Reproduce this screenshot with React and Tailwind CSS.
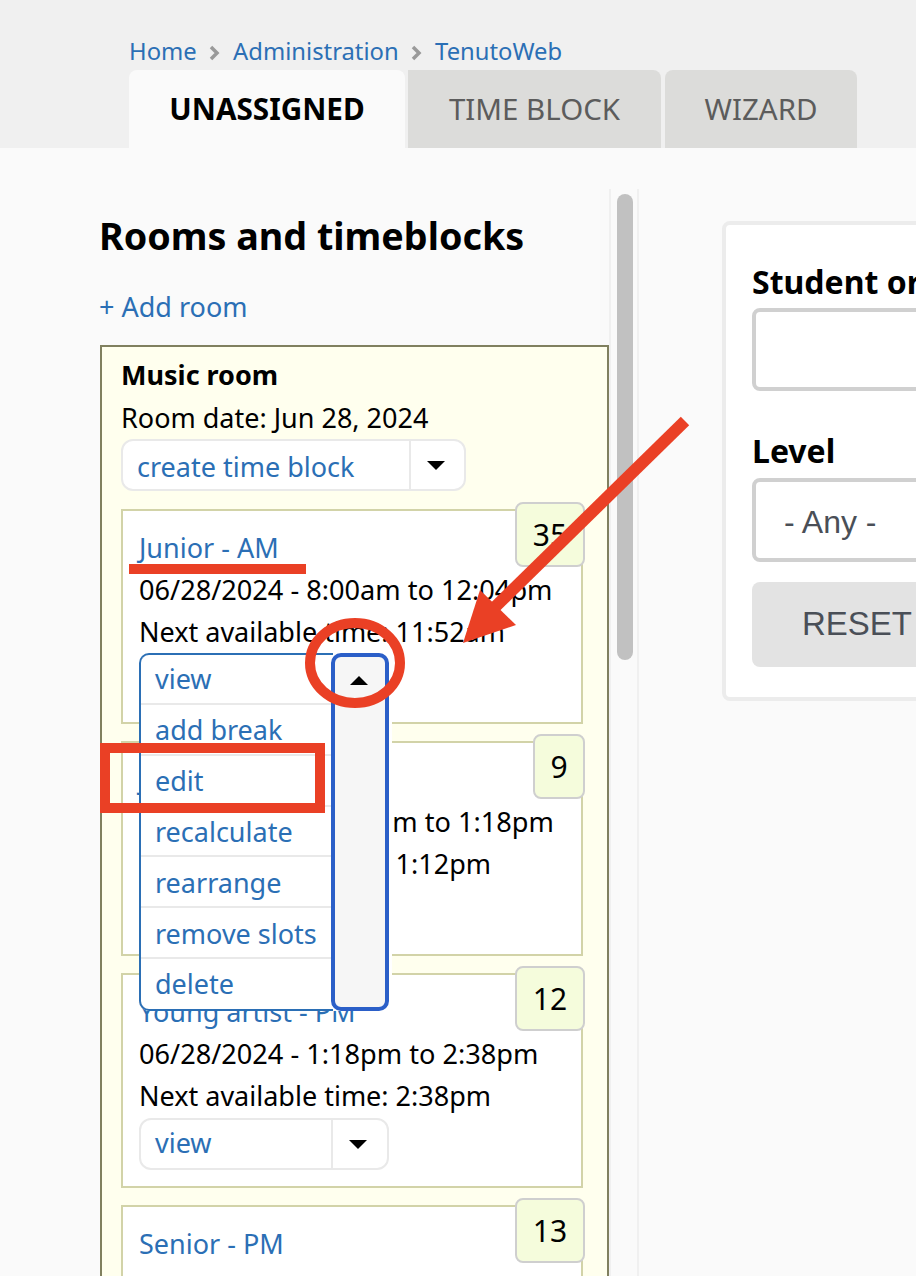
const sans = 'font-["Noto_Sans",sans-serif]';

function SplitButton({ label, width, mainWidth, labelClass = '' }) {
  return (
    <div
      className="flex h-[52px] rounded-[12px] border-2 border-[#e9e9e9] bg-white"
      style={{ width }}
    >
      <a className={`flex items-center pl-[14px] text-[#2b6fb5] ${labelClass}`} style={{ width: mainWidth }}>
        {label}
      </a>
      <div className="flex flex-1 items-center justify-center border-l-2 border-[#e9e9e9] pr-[4px]">
        <div className="h-0 w-0 border-x-[9px] border-t-[9px] border-x-transparent border-t-black" />
      </div>
    </div>
  );
}

function OpenDropdown() {
  const items = ['view', 'add break', 'edit', 'recalculate', 'rearrange', 'remove slots', 'delete'];
  return (
    <div className="absolute left-[16px] top-[142px] z-10 flex h-[358px] w-[253px] rounded-[10px] bg-white">
      <ul className="w-[194px] shrink-0 overflow-hidden rounded-l-[10px] border-2 border-r-0 border-[#2b6fb5]">
        {items.map((item, i) => (
          <li
            key={item}
            className={`flex items-center pl-[14px] text-[#2b6fb5] ${i ? 'h-[50.8px] border-t-2 border-[#e9e9e9] pt-[2px]' : 'h-[48px]'}`}
          >
            {item}
          </li>
        ))}
      </ul>
      <div className="-ml-[2px] flex w-[58px] shrink-0 justify-center rounded-[10px] border-[4px] border-[#2b5fc8] bg-[#f6f6f6] pt-[19px]">
        <div className="-ml-[2px] h-0 w-0 border-x-[9px] border-b-[9px] border-x-transparent border-b-black" />
      </div>
    </div>
  );
}

function TimeBlock({ title, count, badgeWidth, time, next, children }) {
  return (
    <div className="relative h-[215px] border-2 border-[#d2d3a8] bg-white pl-[16px] pt-[16px]">
      <a className="block text-[#2b6fb5]">{title}</a>
      <div className="text-[27.15px]">{time}</div>
      <div>{next}</div>
      <div className="mt-px">
        <SplitButton label="view" width={250} mainWidth={190} labelClass="pb-[2px]" />
      </div>
      <div
        className="absolute -right-[4px] -top-[9px] flex h-[65px] items-center justify-center rounded-[8px] border-2 border-[#cfcfcf] bg-[#f5fcdc] text-[30px] text-black"
        style={{ width: badgeWidth }}
      >
        {count}
      </div>
      {children}
    </div>
  );
}

function Chevron() {
  return (
    <svg className="mx-[12.7px] mt-[4px] shrink-0" width="11" height="16" viewBox="0 0 11 16" fill="none">
      <path d="M2 2 L8 8 L2 14" stroke="#9a9a9a" strokeWidth="3.5" />
    </svg>
  );
}

export default function App() {
  return (
    <div className={`relative h-[1276px] w-[916px] overflow-hidden bg-[#fafafa] text-[27px] leading-[42px] text-black ${sans}`}>
      {/* Breadcrumb and tabs */}
      <header className="h-[148px] bg-[#f0f0f0] pl-[129px] pt-[31px]">
        <nav className="flex h-[39px] items-center text-[23.8px] text-[#2b6fb5]">
          <a>Home</a>
          <Chevron />
          <a>Administration</a>
          <Chevron />
          <a>TenutoWeb</a>
        </nav>
        <div className="flex h-[78px] gap-[4px] text-[29.5px]">
          <div className="flex w-[276px] items-center justify-center rounded-t-[8px] bg-[#fafafa] text-[29.7px] font-bold">UNASSIGNED</div>
          <div className="-ml-px flex w-[253px] items-center justify-center rounded-tr-[8px] bg-[#dcdcda] text-[#5c5c5c]">TIME BLOCK</div>
          <div className="flex w-[192px] items-center justify-center rounded-t-[8px] bg-[#dcdcda] text-[#5c5c5c]">WIZARD</div>
        </div>
      </header>

      <main className="flex">
        {/* Rooms column */}
        <section className="w-[609px] shrink-0 pl-[100px]">
          <h2 className="mt-[63px] -ml-px text-[37.7px] font-bold leading-[50px]">Rooms and timeblocks</h2>
          <a className="mt-[25px] -ml-px block text-[#2b6fb5]">+ Add room</a>
          <div className="mt-[17px] border-2 border-[#80805f] bg-[#ffffee] pl-[19px] pr-[24px] pt-[7px]">
            <div className="font-bold">Music room</div>
            <div className="leading-[43px]">Room date: Jun 28, 2024</div>
            <SplitButton label="create time block" width={345} mainWidth={286} labelClass="pt-[3px]" />
            <div className="mt-[18px] flex flex-col gap-[17px]">
              <TimeBlock
                title="Junior - AM"
                count="35"
                badgeWidth={70}
                time="06/28/2024 - 8:00am to 12:04pm"
                next="Next available time: 11:52am"
              >
                <OpenDropdown />
              </TimeBlock>
              <TimeBlock
                title="Junior - PM"
                count="9"
                badgeWidth={52}
                time="06/28/2024 - 12:04pm to 1:18pm"
                next="Next available time: 1:12pm"
              />
              <TimeBlock
                title="Young artist - PM"
                count="12"
                badgeWidth={70}
                time="06/28/2024 - 1:18pm to 2:38pm"
                next="Next available time: 2:38pm"
              />
              <TimeBlock
                title="Senior - PM"
                count="13"
                badgeWidth={70}
                time="06/28/2024 - 2:38pm to 4:00pm"
                next="Next available time: 4:00pm"
              />
            </div>
          </div>
        </section>

        {/* Scrollbar */}
        <div className="mt-[41px] h-[1100px] w-[30px] shrink-0 border-x-2 border-[#f0f0f0] pl-[6px] pt-[5px]">
          <div className="h-[466px] w-[16px] rounded-full bg-[#c1c1c1]" />
        </div>

        {/* Filter panel */}
        <section className="ml-[83px] mt-[73px] h-[480px] w-[400px] shrink-0 rounded-[8px] border-4 border-[#ececec] bg-white pl-[26px] pt-[35px]">
          <div className="text-[32px] font-bold leading-[44px] whitespace-nowrap">Student or</div>
          <div className="mt-[4px] h-[83px] rounded-[8px] border-4 border-[#d0d0d0]" />
          <div className="mt-[38px] text-[32px] font-bold leading-[44px]">Level</div>
          <div className="mt-[5px] flex h-[84px] items-center rounded-[8px] border-4 border-[#d0d0d0] pl-[28px] pt-[4px] font-['Liberation_Sans',sans-serif] text-[32px] text-[#4a4f57]">
            - Any -
          </div>
          <div className="mt-[20px] flex h-[85px] items-center rounded-[8px] bg-[#e3e3e3] pb-[2px] pl-[50px] font-['Liberation_Sans',sans-serif] text-[33px] text-[#4a4f57]">
            RESET
          </div>
        </section>
      </main>

      {/* Red annotations drawn over the screenshot */}
      <svg className="absolute left-0 top-0 z-20" width="916" height="1276" fill="none">
        <rect x="129" y="564" width="177" height="10" fill="#ea4025" />
        <path d="M685 421 L492 610" stroke="#ea4025" strokeWidth="12" />
        <path d="M463 643 L480 590 L516 625 Z" fill="#ea4025" />
        <ellipse cx="355" cy="663" rx="45" ry="40" stroke="#ea4025" strokeWidth="10" />
        <rect x="105" y="748" width="215" height="60" stroke="#ea4025" strokeWidth="10" />
      </svg>
    </div>
  );
}
